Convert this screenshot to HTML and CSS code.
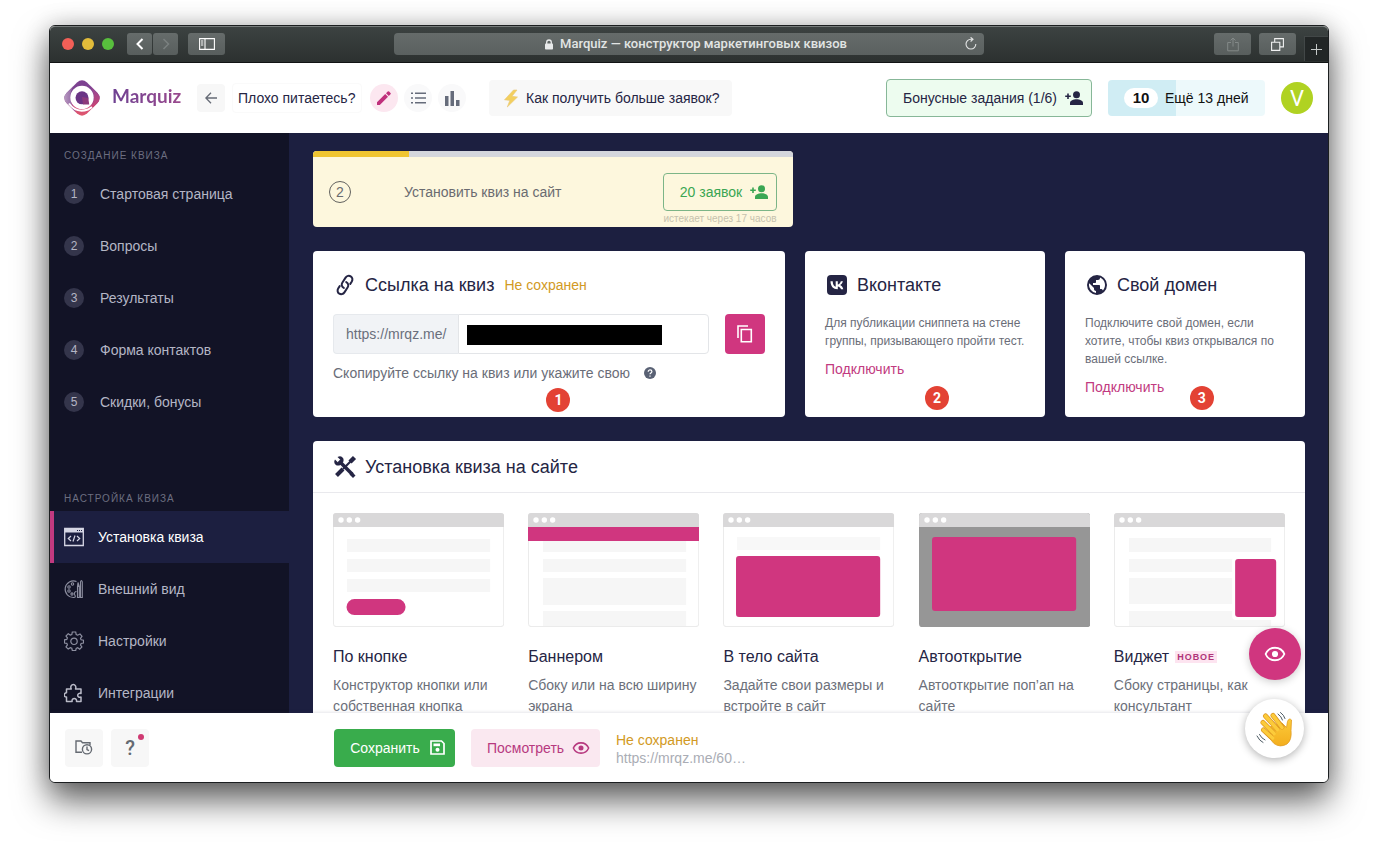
FILE: index.html
```html
<!DOCTYPE html>
<html lang="ru">
<head>
<meta charset="utf-8">
<title>Marquiz — конструктор маркетинговых квизов</title>
<link rel="stylesheet" href="styles.css">
</head>
<body>
<svg class="defs" aria-hidden="true">
  <symbol id="person-add" viewBox="0 0 18 14"><circle cx="11.500" cy="3.700" r="3.500"/><path d="M5 14v-2c0-2.400 3.600-3.700 6.500-3.700s6.500 1.300 6.500 3.700v2z"/><path d="M2.200 2.500h1.600v2h2v1.600h-2v2H2.200v-2h-2V4.500h2z"/></symbol>
  <symbol id="eye" viewBox="0 0 20 14"><path d="M1.500 7C3 3.500 6.200 1.300 10 1.300S17 3.500 18.500 7c-1.500 3.500-4.700 5.700-8.500 5.700S3 10.500 1.500 7z" fill="none" stroke="currentColor" stroke-width="1.700"/><circle cx="10" cy="7" r="2.800"/></symbol>
  <symbol id="lines" viewBox="0 0 171 114"><rect x=".5" y=".5" width="170" height="113" rx="3" fill="#fff" stroke="#ebebeb"/></symbol>
  <symbol id="chrome" viewBox="0 0 171 14"><path d="M0 14V3a3 3 0 0 1 3-3h165a3 3 0 0 1 3 3v11z" fill="#d9d8d9"/><g fill="#fff"><circle cx="8" cy="7" r="2.700"/><circle cx="16.300" cy="7" r="2.700"/><circle cx="24.600" cy="7" r="2.700"/></g></symbol>
</svg>
<div class="window">
  <div class="titlebar">
    <div class="titlebar-left">
      <span class="light red"></span><span class="light yellow"></span><span class="light green"></span>
      <div class="nav-pair">
        <button class="tb-btn narrow" aria-label="Назад"><svg width="10" height="12" viewBox="0 0 10 12"><path d="M7.500 1L2.500 6l5 5" fill="none" stroke="#fff" stroke-width="2"/></svg></button>
        <button class="tb-btn narrow" aria-label="Вперёд"><svg width="10" height="12" viewBox="0 0 10 12"><path d="M2.500 1l5 5-5 5" fill="none" stroke="#7b8180" stroke-width="1.500"/></svg></button>
      </div>
      <button class="tb-btn" aria-label="Боковая панель"><svg width="16" height="12" viewBox="0 0 16 12"><path d="M.6.600h14.800v10.800H.6zM6 .6v10.800M2 3h2.300M2 5h2.300M2 7h2.300" fill="none" stroke="#fff" stroke-width="1.100"/></svg></button>
    </div>
    <div class="urlbar">
      <svg width="8" height="11" viewBox="0 0 8 11"><rect y="4.500" width="8" height="6" rx=".8" fill="#e8eaea"/><path d="M1.700 5V3.300a2.300 2.300 0 0 1 4.600 0V5" fill="none" stroke="#e8eaea" stroke-width="1.300"/></svg>
      <span>Marquiz — конструктор маркетинговых квизов</span>
      <button class="reload" aria-label="Обновить"><svg width="12" height="13" viewBox="0 0 12 13"><path d="M10.800 7A4.900 4.900 0 1 1 6 2.200h1.500M5.600.3L8 2.300 5.600 4.500" fill="none" stroke="#e3e5e5" stroke-width="1.100"/></svg></button>
    </div>
    <div class="titlebar-right">
      <button class="tb-btn" aria-label="Поделиться"><svg width="12" height="15" viewBox="0 0 12 15"><path d="M4 5.500H.7v8.300h10.600V5.500H8M6 9.500V1M3.500 3.500L6 1l2.500 2.500" fill="none" stroke="#838988"/></svg></button>
      <button class="tb-btn" aria-label="Вкладки"><svg width="13" height="13" viewBox="0 0 13 13"><path d="M.6 4.200h8.200v8.200H.6zM3.700 4V.6h8.700v8.300H9" fill="none" stroke="#f1f2f2" stroke-width="1.100"/></svg></button>
      <button class="new-tab" aria-label="Новая вкладка"><svg width="11" height="11" viewBox="0 0 11 11"><path d="M5.500 0v11M0 5.500h11" stroke="#c5c9c8"/></svg></button>
    </div>
  </div>

  <header class="header">
    <a class="logo" href="#">
      <svg width="36" height="36" viewBox="0 0 36 36">
        <defs><linearGradient id="lg" x1="0" y1="0" x2="0" y2="1"><stop offset="0" stop-color="#7d4191"/><stop offset=".45" stop-color="#7b448f"/><stop offset=".75" stop-color="#cf4477"/><stop offset="1" stop-color="#e05a6e"/></linearGradient>
        <linearGradient id="lg2" x1="0" y1="0" x2="1" y2="0"><stop offset="0" stop-color="#b79ac0"/><stop offset="1" stop-color="#84509a"/></linearGradient>
        <linearGradient id="lg3" x1="0" y1="0" x2="0" y2="1"><stop offset="0" stop-color="#8a4a9a"/><stop offset="1" stop-color="#d0426f"/></linearGradient></defs>
        <path fill="url(#lg)" d="M13 2.500Q18-1.800 23 2.500L33.500 13Q37.800 18 33.500 23L23 33.500Q18 37.800 13 33.500L2.500 23Q-1.800 18 2.500 13z"/>
        <path fill="url(#lg2)" d="M2.500 13L9.500 6Q6 11 6.500 18T12 32.500L2.500 23Q-1.800 18 2.500 13z"/>
        <path fill="url(#lg3)" d="M26 5.500L33.500 13Q37.800 18 33.500 23L28 28.500Q30.500 22 30 17T26 5.500z"/>
        <circle cx="18" cy="17.500" r="11.700" fill="#fff"/>
        <path d="M5 23.500Q12 33.500 24 29.500L28 27" fill="none" stroke="#fff" stroke-width="2"/>
        <circle cx="18" cy="17.800" r="6.500" fill="#6a3585"/><path d="M18 17l6.300 1 .9 6.600H19z" fill="#8c3a7c"/>
      </svg>
      <span>Marquiz</span>
    </a>
    <button class="back" aria-label="Назад"><svg width="12" height="12" viewBox="0 0 12 12"><path d="M12 6H1M6 .8L.9 6 6 11.200" fill="none" stroke="#666b76" stroke-width="1.300"/></svg></button>
    <input class="quiz-name" aria-label="Название квиза" value="Плохо питаетесь?">
    <div class="round-tools">
      <button class="round pink" aria-label="Редактировать"><svg width="14" height="14" viewBox="0 0 14 14"><path d="M0 11.200L8.200 3l2.800 2.800L2.800 14H0zM9 2.200L10.700.5q.7-.7 1.400 0l1.400 1.400q.7.700 0 1.400L11.800 5z" fill="#c0307c"/></svg></button>
      <button class="round" aria-label="Список"><svg width="15" height="12" viewBox="0 0 15 12"><path d="M4 1.200h11M4 6h11M4 10.800h11M0 1.200h2M0 6h2M0 10.800h2" stroke="#666c7b" stroke-width="1.500"/></svg></button>
      <button class="round" aria-label="Статистика"><svg width="15" height="15" viewBox="0 0 15 15"><path d="M0 5h3.500v10H0zM5.500 0H9v15H5.500zM11 9h3.500v6H11z" fill="#666c7b"/></svg></button>
    </div>
    <button class="more-leads"><svg width="16" height="19" viewBox="0 0 16 19"><path d="M10.500 1L1.500 10.800l5.300.6L4.300 18 14.500 8 9 7.300 14 1z" fill="#f3cf5e" stroke="#e8c878" stroke-width=".6"/></svg>Как получить больше заявок?</button>
    <button class="bonus">Бонусные задания (1/6)<svg width="18" height="14"><use href="#person-add"/></svg></button>
    <div class="days"><b>10</b>Ещё 13 дней</div>
    <button class="avatar">V</button>
  </header>

  <div class="body">
    <nav class="sidebar">
      <h2>Создание квиза</h2>
      <a href="#"><i>1</i>Стартовая страница</a>
      <a href="#"><i>2</i>Вопросы</a>
      <a href="#"><i>3</i>Результаты</a>
      <a href="#"><i>4</i>Форма контактов</a>
      <a href="#"><i>5</i>Скидки, бонусы</a>
      <h2 class="second">Настройка квиза</h2>
      <a href="#" class="active"><svg width="20" height="20" viewBox="0 0 20 20"><path d="M.7 1.500h18.600v17H.7z" fill="none" stroke="#d5d6e4" stroke-width="1.300"/><path d="M.7 1.500h18.600v4H.7z" fill="#d5d6e4"/><path d="M13 3.500h1M15 3.500h1M17 3.500h1" stroke="#1c1f40"/><path d="M7 9l-2.700 2.500L7 14M13 9l2.700 2.500L13 14M11 8.500l-2 6" fill="none" stroke="#d5d6e4" stroke-width="1.200"/></svg>Установка квиза</a>
      <a href="#"><svg width="20" height="20" viewBox="0 0 20 20"><g fill="none" stroke="#8d8fa0" stroke-width="1.100"><path d="M12.500 2.500A8.300 8.300 0 1 0 10 18.500c2 0 1.200-2 .6-3-.8-1.500.3-3 1.900-3"/><circle cx="5" cy="8" r="1.200"/><circle cx="8.500" cy="5" r="1.200"/><circle cx="5" cy="12" r="1.200"/><circle cx="8" cy="15" r="1.100"/><path d="M13.500 7.500h1.800v11h-1.800zM16.500 3v15.500h1.800V3q-.9-3-1.800 0zM13.500 7.500l.5-4 1.300 4"/></g></svg>Внешний вид</a>
      <a href="#"><svg width="20" height="20" viewBox="0 0 20 20"><g fill="none" stroke="#8d8fa0" stroke-width="1.200"><path d="M8.300 1h3.400l.5 2.500 1.500.7L16 2.900 18 5.300l-1.500 2 .6 1.500 2.400.4v2.800l-2.400.5-.6 1.500 1.400 2-2.200 2.200-2-1.400-1.500.6-.5 2.100H8.300l-.5-2.200-1.500-.6-2.100 1.400L2 15.900l1.400-2-.6-1.500L.5 12V8.800l2.300-.4.6-1.500L2 5l2.200-2.300 2.100 1.400 1.500-.6z"/><circle cx="10" cy="10.300" r="3.200"/></g></svg>Настройки</a>
      <a href="#"><svg width="20" height="20" viewBox="0 0 20 20"><path d="M2.500 6h4.800C6 3.500 7.500 1.500 9.300 1.500S12.500 3.500 11.500 6H17v4.500c-1.800-.7-3.300.3-3.300 1.800s1.500 2.500 3.300 1.700V18.500h-4.500c.3-2-.8-3-2.200-3s-2.600 1-2.200 3H2.500V14c-3 .4-3-4.400 0-4.200z" fill="none" stroke="#b9bac7" stroke-width="1.500" stroke-linejoin="round"/></svg>Интеграции</a>
    </nav>

    <main class="main">
      <section class="promo">
        <progress max="100" value="20" aria-label="Прогресс заданий"></progress>
        <div class="promo-row">
          <span class="step">2</span>
          <span class="promo-text">Установить квиз на сайт</span>
          <div class="promo-action">
            <button>20 заявок<svg width="18" height="14"><use href="#person-add"/></svg></button>
            <small>истекает через 17 часов</small>
          </div>
        </div>
      </section>

      <div class="cards">
        <section class="card">
          <h3><svg width="24" height="24" viewBox="0 0 24 24"><g transform="rotate(-12 12 12)" fill="none" stroke="#252544" stroke-width="2" stroke-linecap="round"><path d="M10.200 14.600c-1.900-1.600-1.800-3.900-.4-5.300l4.300-4.400c1.600-1.600 3.900-1.500 5.300-.2s1.500 3.700 0 5.300l-2 2"/><path d="M13.800 9.400c1.900 1.600 1.800 3.900.4 5.300l-4.300 4.400c-1.600 1.600-3.900 1.500-5.300.2s-1.500-3.700 0-5.300l2-2"/></g></svg>Ссылка на квиз <span class="unsaved">Не сохранен</span></h3>
          <div class="link-row">
            <label class="prefix" for="slug">https://mrqz.me/</label>
            <div class="slug"><input id="slug" type="text"><span class="redacted"></span></div>
            <button class="copy" aria-label="Скопировать"><svg width="16" height="18" viewBox="0 0 16 18"><path d="M1 13V1h10M4.300 4.500h10v12.300h-10z" fill="none" stroke="#fff" stroke-width="1.600"/></svg></button>
          </div>
          <p class="hint">Скопируйте ссылку на квиз или укажите свою <svg width="12" height="12" viewBox="0 0 12 12"><circle cx="6" cy="6" r="6" fill="#596174"/><path d="M4.200 4.700C4.200 2.300 7.900 2.400 7.900 4.600 7.900 6 6 6 6 7.300M6 8.500V9.700" fill="none" stroke="#fff" stroke-width="1.200"/></svg></p>
          <span class="marker one">1</span>
        </section>
        <section class="card">
          <h3><svg width="24" height="24" viewBox="0 0 24 24"><rect x="2" y="2" width="20" height="20" rx="4" fill="#252544"/><path d="M12.600 16.200C8.200 16.200 5.600 13.200 5.500 8.200h2.200c.1 3.700 1.700 5.200 3 5.500V8.200h2.100v3.200c1.300-.1 2.600-1.600 3-3.200h2.100c-.4 1.900-1.800 3.300-2.800 3.900 1 .5 2.600 1.700 3.200 4.100H16c-.5-1.500-1.700-2.700-3.200-2.800v2.800z" fill="#fff"/></svg>Вконтакте</h3>
          <p class="desc">Для публикации сниппета на стене группы, призывающего пройти тест.</p>
          <a class="connect" href="#">Подключить</a>
          <span class="marker two">2</span>
        </section>
        <section class="card">
          <h3><svg width="24" height="24" viewBox="0 0 24 24"><path d="M12 2a10 10 0 1 0 0 20 10 10 0 0 0 0-20zm-1 17.900A8 8 0 0 1 4.200 10.200L9 15v1c0 1.100.9 2 2 2zm6.900-2.500c-.3-.8-1-1.400-1.900-1.400h-1v-3c0-.6-.4-1-1-1H8v-2h2c.6 0 1-.4 1-1V7h2c1.100 0 2-.9 2-2v-.4a8 8 0 0 1 2.900 12.800z" fill="#252544"/></svg>Свой домен</h3>
          <p class="desc">Подключите свой домен, если хотите, чтобы квиз открывался по вашей ссылке.</p>
          <a class="connect" href="#">Подключить</a>
          <span class="marker three">3</span>
        </section>
      </div>

      <section class="install">
        <h3><svg width="24" height="24" viewBox="0 0 24 24"><g fill="none" stroke="#252544"><path d="M6 6l13.500 13.500" stroke-width="3.600"/><path d="M3.500 20.500L10 14" stroke-width="4"/><path d="M10 14L18 6" stroke-width="2.200"/><path d="M17 7l4.500-4.500" stroke-width="4.400"/></g><path d="M2 4.500L4.800 7.300 7.300 4.800 4.500 2Q8-.2 10.200 3.200 11 5 10.200 7L7 10.200Q5 11 3.200 10.200 0 8 2 4.500z" fill="#252544"/><path d="M19 17l3.500 3.500-2.500 2.500-3.500-3.500z" fill="#252544"/></svg>Установка квиза на сайте</h3>
        <div class="options">
          <article>
            <svg class="thumb" viewBox="0 0 171 114"><use href="#lines"/><g fill="#f6f6f6"><path d="M14 26h143v13H14zM14 46h143v13H14zM14 66h143v13H14z"/></g><rect x="13.500" y="86" width="59" height="16" rx="8" fill="#d0367f"/><use href="#chrome" width="171" height="14"/></svg>
            <h4>По кнопке</h4><p>Конструктор кнопки или собственная кнопка</p>
          </article>
          <article>
            <svg class="thumb" viewBox="0 0 171 114"><use href="#lines"/><g fill="#f6f6f6"><path d="M15 28h143v11H15zM15 46h143v13H15zM15 65h143v27H15zM15 98h143v15H15z"/></g><path d="M0 13h171v15H0z" fill="#d0367f"/><use href="#chrome" width="171" height="14"/></svg>
            <h4>Баннером</h4><p>Сбоку или на всю ширину экрана</p>
          </article>
          <article>
            <svg class="thumb" viewBox="0 0 171 114"><use href="#lines"/><path d="M14 24h143v13H14z" fill="#f8f8f8"/><rect x="13" y="43" width="144" height="61" rx="3" fill="#d0367f"/><use href="#chrome" width="171" height="14"/></svg>
            <h4>В тело сайта</h4><p>Задайте свои размеры и встройте в сайт</p>
          </article>
          <article>
            <svg class="thumb" viewBox="0 0 171 114"><rect width="171" height="114" rx="3" fill="#969696"/><rect x="13" y="24" width="144" height="74" rx="3" fill="#d0367f"/><use href="#chrome" width="171" height="14"/></svg>
            <h4>Автооткрытие</h4><p>Автооткрытие поп’ап на сайте</p>
          </article>
          <article>
            <svg class="thumb" viewBox="0 0 171 114"><use href="#lines"/><g fill="#f6f6f6"><path d="M15 25h142v14H15zM15 46h142v13H15zM15 65h142v26H15zM15 98h142v15H15z"/></g><rect x="118" y="44" width="48" height="63" rx="4" fill="#fff"/><rect x="121" y="46" width="41" height="58" rx="3" fill="#d0367f"/><use href="#chrome" width="171" height="14"/></svg>
            <h4>Виджет <mark>Новое</mark></h4><p>Сбоку страницы, как консультант</p>
          </article>
        </div>
      </section>
    </main>
  </div>

  <footer class="footer">
    <div class="footer-tools">
      <button class="square" aria-label="История"><svg width="18" height="15" viewBox="0 0 18 15"><g fill="none" stroke="#656a72" stroke-width="1.400"><path d="M7 12.300H1V1h5l1.500 1.700H15V5"/><circle cx="12" cy="9.300" r="4.600"/><path d="M12 6.500v3l2 1.200"/></g></svg></button>
      <button class="square help">?<span class="dot"></span></button>
    </div>
    <button class="save">Сохранить<svg width="15" height="15" viewBox="0 0 15 15"><path d="M1 1h10.500L14 3.500V14H1z" fill="none" stroke="#fff" stroke-width="1.700"/><path d="M3.500 3.500h6.500v2.700H3.500z" fill="#fff"/><circle cx="7.500" cy="9.700" r="2" fill="#fff"/></svg></button>
    <button class="view">Посмотреть<svg width="18" height="14"><use href="#eye"/></svg></button>
    <div class="status"><span class="unsaved">Не сохранен</span><a href="#">https://mrqz.me/60…</a></div>
  </footer>

  <div class="floating">
    <button class="preview" aria-label="Предпросмотр"><svg width="22" height="16" viewBox="0 0 20 14"><use href="#eye"/></svg></button>
    <button class="chat" aria-label="Чат"><svg width="38" height="38" viewBox="0 0 38 38"><defs><linearGradient id="hand" x1="0" y1="0" x2="0" y2="1"><stop offset="0" stop-color="#fccb3a"/><stop offset="1" stop-color="#f3ae1e"/></linearGradient></defs>
      <path d="M14 17L26 13 30.500 17.500 31.500 11.500Q33 7.500 35.500 10L35 20.500Q36 30 31 34 24 38 18 33.500L11.500 26z" fill="url(#hand)" stroke="#e09a20" stroke-width=".8"/>
      <g fill="none" stroke-linecap="round"><path d="M17 5.500L26 17" stroke="#dd9620" stroke-width="5"/><path d="M17 5.500L26 17.500" stroke="#fccb3a" stroke-width="3.600"/>
      <path d="M9.500 6L21 18.500" stroke="#dd9620" stroke-width="5"/><path d="M9.500 6L21.500 19.500" stroke="#fccb3a" stroke-width="3.600"/>
      <path d="M7 12.500L17 22.500" stroke="#dd9620" stroke-width="5"/><path d="M7 12.500L18 23.500" stroke="#fccb3a" stroke-width="3.600"/>
      <path d="M7.500 20L15 27" stroke="#dd9620" stroke-width="5"/><path d="M7.500 20L16.500 28" stroke="#fccb3a" stroke-width="3.600"/>
      <g stroke="#4d5b64"><path d="M22 4q3.500 2.500 4.500 6M24.500 2.500q3.500 2.500 4.500 6M1 26q2.500 5 6 6.500M3.500 24.500q2 4 5.500 5.500"/></g></g></svg></button>
  </div>
</div>
</body>
</html>
```
FILE: styles.css
```css
* { box-sizing: border-box; }
body {
  margin: 0;
  height: 100vh;
  padding: 25px 49px 73px;
  background: #fff;
  font-family: "Liberation Sans", Arial, sans-serif;
  font-size: 14px;
  color: #252544;
  overflow: hidden;
}
button, input { font: inherit; color: inherit; }
button { border: 0; padding: 0; background: none; display: flex; align-items: center; justify-content: center; cursor: pointer; white-space: nowrap; }
a { text-decoration: none; color: inherit; }
h2, h3, h4, p { margin: 0; font-weight: 400; }
svg { flex: none; fill: currentColor; display: block; }
.defs { position: absolute; width: 0; height: 0; }

.window {
  position: relative;
  height: 100%;
  display: flex;
  flex-direction: column;
  border: 1px solid #1c1f20;
  border-radius: 6px;
  background: #fff;
  box-shadow: 0 18px 34px rgba(0, 0, 0, .6), 0 0 24px rgba(0, 0, 0, .2);
}

.titlebar {
  display: grid;
  grid-template-columns: 1fr minmax(0, 590px) 1fr;
  align-items: center;
  height: 37px;
  flex: none;
  padding-bottom: 1px;
  border-top: 1px solid #777c7b;
  border-bottom: 1px solid #111414;
  border-radius: 5px 5px 0 0;
  background: linear-gradient(#3c4241, #2c3130);
}
.titlebar-left { display: flex; align-items: center; gap: 8px; padding-left: 12px; }
.light { width: 12px; height: 12px; border-radius: 50%; }
.light.red { background: #f25f57; }
.light.yellow { background: #e2bc3a; }
.light.green { background: #58bf3d; }
.nav-pair { display: flex; gap: 1px; margin: 0 2px 0 5px; }
.tb-btn { width: 37px; height: 22px; border-radius: 3px; background: linear-gradient(#666c6b, #585e5d); }
.tb-btn.narrow { width: 25px; }
.urlbar {
  position: relative;
  display: flex;
  align-items: center;
  justify-content: center;
  gap: 7px;
  height: 22px;
  padding-left: 14px;
  border-radius: 4px;
  background: linear-gradient(#656b6a, #5a605f);
  color: #e2e5e4;
  font: 500 13px/22px Roboto, sans-serif;
}
.reload { position: absolute; right: 7px; top: 4px; }
.titlebar-right { display: flex; justify-content: flex-end; align-items: center; gap: 8px; height: 34px; }
.new-tab { width: 24px; height: 25px; align-self: flex-end; border: 1px solid #424747; border-width: 1px 0 0 1px; background: #222626; }

.header {
  display: flex;
  align-items: center;
  height: 70px;
  flex: none;
  padding: 0 15px 0 14px;
  background: #fff;
}
.logo { display: flex; align-items: center; gap: 12px; width: 133px; font: 700 19px/24px Lato, sans-serif; }
.logo span { padding-bottom: 4px; background: linear-gradient(90deg, #6e4192, #9a4a8e); background-clip: text; color: transparent; }
.back { width: 28px; height: 28px; border-radius: 4px; background: #f7f7f7; }
.quiz-name { width: 130px; height: 30px; margin-left: 7px; padding: 0 5px; border: 1px solid #fafafa; border-radius: 4px; background: #fff; }
.round-tools { display: flex; gap: 6px; margin: 0 23px 0 8px; }
.round { width: 28px; height: 28px; border-radius: 50%; background: #f9f9fa; }
.round.pink { background: #fce7f0; }
.more-leads { height: 36px; gap: 7px; padding: 0 12px 0 14px; border-radius: 4px; background: #f8f8f8; }
.bonus { height: 38px; gap: 8px; width: 206px; margin-left: auto; padding-left: 8px; border: 1px solid #87b798; border-radius: 4px; background: #edfcef; }
.days {
  display: flex;
  align-items: center;
  gap: 7px;
  width: 157px;
  height: 36px;
  margin: 0 16px;
  padding-left: 16px;
  border-radius: 4px;
  background: linear-gradient(90deg, #d0edf4 43%, #edf9fb 43%);
  color: #111;
}
.days b { width: 34px; line-height: 20px; border-radius: 10px; background: #fff; text-align: center; font-size: 15px; }
.avatar { width: 32px; height: 32px; border-radius: 50%; background: #b0d222; color: #fff; font: 22px Roboto, sans-serif; }

.body { display: flex; flex: 1; min-height: 0; background: #1c1f40; }
.sidebar { width: 239px; flex: none; background: #121326; color: #b4b6c5; overflow: hidden; }
.sidebar h2 { padding: 15px 14px 4px; font-size: 10px; line-height: 16px; letter-spacing: 1px; text-transform: uppercase; color: #6c6e80; }
.sidebar h2.second { margin-top: 48px; }
.sidebar a { display: flex; align-items: center; gap: 16px; height: 52px; padding-left: 14px; }
.sidebar a svg { margin-right: -2px; }
.sidebar i { width: 20px; height: 20px; border-radius: 50%; background: #34354b; font: 12px/20px "Liberation Sans", sans-serif; text-align: center; }
.sidebar .active { padding-left: 10px; border-left: 4px solid #c23a80; background: #1c1f40; color: #fff; }

.main { flex: 1; min-width: 0; padding: 18px 23px 0 24px; overflow: hidden; }
.promo { max-width: 480px; border-radius: 4px; overflow: hidden; background: #fdf7dd; color: #6a6b70; }
.promo progress { display: block; width: 100%; height: 6px; border: 0; appearance: none; background: #d4d6dc; }
.promo progress::-webkit-progress-bar { background: #d4d6dc; }
.promo progress::-webkit-progress-value { background: #f0c530; }
.promo-row { display: flex; align-items: flex-start; padding: 16px 16px 0; height: 70px; }
.step { width: 22px; height: 22px; margin: 8px 53px 0 0; border: 1px solid #62625f; border-radius: 50%; line-height: 20px; text-align: center; }
.promo-text { flex: 1; line-height: 38px; }
.promo-action button { width: 114px; height: 38px; gap: 8px; padding-left: 8px; border: 1px solid #7cb587; border-radius: 4px; color: #3aa653; }
.promo-action small { display: block; font-size: 10px; line-height: 16px; text-align: center; color: #c6c2ae; white-space: nowrap; }

.cards { display: grid; grid-template-columns: minmax(0, 1fr) 240px 240px; gap: 20px; margin: 24px 0; }
.card { position: relative; padding: 22px 20px 21px; border-radius: 4px; background: #fff; }
h3 { display: flex; align-items: center; gap: 8px; font-size: 18px; line-height: 24px; }
.card h3 { margin-bottom: 17px; }
.unsaved { font-size: 14px; color: #d29a24; }
.card .unsaved { margin-left: 2px; }
.link-row { display: flex; height: 40px; }
.prefix { width: 125px; padding-left: 12px; line-height: 38px; border: 1px solid #e6e9ed; border-right: 0; border-radius: 4px 0 0 4px; background: #f1f3f6; color: #6a6f7c; }
.slug { position: relative; flex: 1; }
.slug input { width: 100%; height: 40px; padding: 0 8px; border: 1px solid #e3e5e8; border-radius: 0 4px 4px 0; }
.redacted { position: absolute; left: 9px; top: 11px; width: 195px; height: 20px; background: #000; }
.copy { width: 40px; height: 40px; margin-left: 16px; border-radius: 4px; background: #d0367f; }
.hint { display: flex; align-items: center; gap: 14px; margin-top: 10px; line-height: 18px; color: #6a6d78; }
.desc { font-size: 12px; line-height: 18px; color: #6a6d78; }
.connect { display: block; width: max-content; margin-top: 10px; line-height: 18px; color: #c23a80; }
.marker { position: absolute; width: 24px; height: 24px; margin-left: -12px; border-radius: 50%; background: #e34234; color: #fff; font: 700 14px/24px Roboto, sans-serif; text-align: center; }
.marker.one { left: 52%; bottom: 5px; }
.marker.two { left: 55%; bottom: 7px; }
.marker.three { left: 57%; bottom: 7px; }

.install { border-radius: 4px 4px 0 0; background: #fff; }
.install h3 { height: 52px; padding: 0 20px; border-bottom: 1px solid #e9e9ed; }
.options { display: grid; grid-template-columns: repeat(5, minmax(0, 1fr)); gap: 24px; padding: 20px 20px 24px; }
.thumb { width: 100%; height: auto; }
h4 { display: flex; align-items: center; gap: 6px; margin: 20px 0 8px; font-size: 16px; line-height: 20px; }
.options p { line-height: 21px; color: #6c707a; }
mark { padding: 0 2px; background: #fde4f0; color: #b03579; font-size: 9px; font-weight: 700; line-height: 12px; letter-spacing: 1px; text-transform: uppercase; }

.footer {
  position: relative;
  display: flex;
  align-items: center;
  gap: 16px;
  height: 69px;
  flex: none;
  border-radius: 0 0 5px 5px;
  background: #fff;
  box-shadow: 0 -1px 3px rgba(60, 60, 90, .12);
}
.footer-tools { display: flex; gap: 8px; width: 268px; padding-left: 15px; }
.square { position: relative; width: 38px; height: 38px; border-radius: 4px; background: #f7f7f7; color: #656a72; }
.help { font: 500 20px Roboto, sans-serif; }
.dot { position: absolute; top: 5px; right: 5px; width: 6px; height: 6px; border-radius: 50%; background: #cf3a72; }
.save, .view { height: 38px; border-radius: 4px; padding-left: 6px; }
.save { width: 121px; gap: 10px; background: #39ac4c; color: #fff; }
.view { width: 129px; gap: 8px; background: #fae8f0; color: #b7397f; }
.status { padding-top: 3px; line-height: 18px; }
.status span, .status a { display: block; }
.status a { color: #aaadb5; }

.floating { position: absolute; right: 24px; bottom: 24px; display: flex; flex-direction: column; align-items: center; gap: 19px; }
.preview { width: 52px; height: 52px; border-radius: 50%; background: #d0367f; color: #fff; box-shadow: 0 2px 8px rgba(0, 0, 0, .2); }
.chat { width: 59px; height: 59px; border-radius: 50%; background: #fff; box-shadow: 0 2px 9px rgba(0, 0, 0, .3); }
```
